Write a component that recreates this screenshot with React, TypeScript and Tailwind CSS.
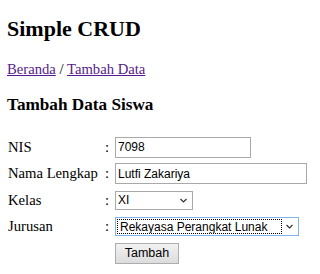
import React from 'react';

const serif = { fontFamily: '"Liberation Serif", "Times New Roman", serif' };

const Chevron = () => (
  <svg width="7" height="5" viewBox="0 0 7 5" className="shrink-0">
    <polyline points="0.5,1 3.5,4 6.5,1" fill="none" stroke="#333" strokeWidth="1.2" />
  </svg>
);

const FormRow = ({ label, children }: { label: string; children: React.ReactNode }) => (
  <div className="flex h-[26.5px] items-center">
    <div className="w-[97px] shrink-0">{label}</div>
    <div className="w-[10px] shrink-0">:</div>
    {children}
  </div>
);

function App() {
  return (
    <div className="h-[274px] w-[320px] overflow-hidden bg-white pl-[7px] text-[14.67px] leading-[17px] text-black" style={serif}>
      <h1 className="pt-[16px] text-[22px] leading-[25px] font-bold">Simple CRUD</h1>

      <div className="mt-[19.5px]">
        <a href="#" className="text-[#551a8b] underline">Beranda</a>
        {' / '}
        <a href="#" className="text-[#551a8b] underline">Tambah Data</a>
      </div>

      <h3 className="mt-[17.5px] text-[17.2px] leading-[20px] font-bold">Tambah Data Siswa</h3>

      <div className="mt-[19px] pl-[1px]">
        <FormRow label="NIS">
          <input
            defaultValue="7098"
            className="h-[21px] w-[136px] border border-[#a9a9a9] bg-white px-[2px] font-['Liberation_Sans',sans-serif] text-[12px] outline-none"
          />
        </FormRow>
        <FormRow label="Nama Lengkap">
          <input
            defaultValue="Lutfi Zakariya"
            className="h-[21px] w-[192px] border border-[#a9a9a9] bg-white px-[2px] font-['Liberation_Sans',sans-serif] text-[12px] outline-none"
          />
        </FormRow>
        <FormRow label="Kelas">
          <div className="flex h-[19px] w-[78px] items-center border border-[#a9a9a9] bg-white pr-[5px] font-['Liberation_Sans',sans-serif] text-[12px]">
            <select defaultValue="XI" className="h-full flex-1 appearance-none bg-transparent pl-[2px] outline-none">
              <option>X</option>
              <option>XI</option>
              <option>XII</option>
            </select>
            <Chevron />
          </div>
        </FormRow>
        <FormRow label="Jurusan">
          <div className="flex h-[19px] w-[184px] items-center border border-[#7eb4ea] bg-white p-[1px] pr-[5px] font-['Liberation_Sans',sans-serif] text-[12px]">
            <select
              defaultValue="Rekayasa Perangkat Lunak"
              className="h-full flex-1 appearance-none border border-dotted border-black bg-transparent pl-[2px] leading-[14px] outline-none"
            >
              <option>Rekayasa Perangkat Lunak</option>
              <option>Teknik Komputer Jaringan</option>
              <option>Multimedia</option>
            </select>
            <div className="ml-[4px] flex items-center">
              <Chevron />
            </div>
          </div>
        </FormRow>
        <div className="flex h-[26.5px] items-center pl-[107px]">
          <button className="h-[21px] w-[64px] border border-[#adadad] bg-[linear-gradient(#f2f2f2,#dcdcdc)] font-['Liberation_Sans',sans-serif] text-[12.5px] text-black">
            Tambah
          </button>
        </div>
      </div>
    </div>
  );
}

export default App;
